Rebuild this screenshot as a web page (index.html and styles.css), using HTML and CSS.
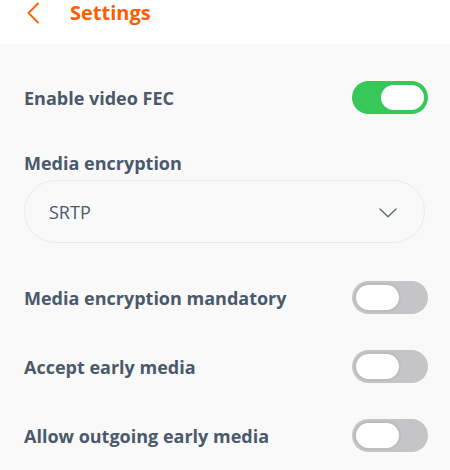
FILE: index.html
```html
<!DOCTYPE html>
<html lang="en">
<head>
  <meta charset="UTF-8">
  <meta name="viewport" content="width=device-width, initial-scale=1.0">
  <title>Settings</title>
  <link rel="stylesheet" href="styles.css">
</head>
<body>
  <!-- Cabeçalho -->
  <div class="header">
    <span class="back">
      <svg width="14" height="22" viewBox="0 0 14 22"><path d="M12 1.5 L2.5 11 L12 20.5" fill="none" stroke="#fe5e00" stroke-width="1.8" stroke-linecap="round" stroke-linejoin="round"/></svg>
    </span>
    <h1>Settings</h1>
  </div>

  <div class="list">
    <div class="row">
      <span class="label">Enable video FEC</span>
      <span class="toggle on"><span class="knob"></span></span>
    </div>

    <div class="section">
      <div class="label">Media encryption</div>
      <div class="select">
        <span>SRTP</span>
        <svg width="18" height="10" viewBox="0 0 18 10"><path d="M1 1 L9 8.8 L17 1" fill="none" stroke="#5d6a79" stroke-width="1.4" stroke-linecap="round" stroke-linejoin="round"/></svg>
      </div>
    </div>

    <div class="row">
      <span class="label">Media encryption mandatory</span>
      <span class="toggle"><span class="knob"></span></span>
    </div>
    <div class="row">
      <span class="label">Accept early media</span>
      <span class="toggle"><span class="knob"></span></span>
    </div>
    <div class="row">
      <span class="label">Allow outgoing early media</span>
      <span class="toggle"><span class="knob"></span></span>
    </div>
  </div>
</body>
</html>
```

FILE: styles.css
```css
body {
  font-family: "Open Sans", "Noto Sans", sans-serif;
  background-color: #f9f9f9;
  margin: 0;
  color: #4a596b;
}
.header {
  background: #fff;
  height: 44px;
  display: flex;
  align-items: flex-start;
  padding-left: 26px;
}
.back {
  display: flex;
  height: 24px;
  align-items: center;
  margin-top: 1px;
}
.header h1 {
  margin: 0 0 0 30px;
  font-size: 20px;
  line-height: 26px;
  font-weight: 700;
  color: #fe5e00;
}
.list {
  padding: 19px 22px 0 24px;
}
.row {
  height: 69px;
  display: flex;
  align-items: center;
  justify-content: space-between;
}
.label {
  font-size: 18px;
  font-weight: 700;
  line-height: 24px;
}
.section {
  padding-top: 19px;
  margin-bottom: 20px;
}
.select {
  margin: 5px 3px 0 0;
  height: 61px;
  border: 1px solid #ebebeb;
  border-radius: 32px;
  display: flex;
  align-items: center;
  justify-content: space-between;
  padding: 0 27px 0 24px;
  font-size: 18px;
}
.select svg {
  margin-top: 2px;
}
.toggle {
  width: 76px;
  height: 33px;
  border-radius: 17px;
  background: #c5c5c7;
  box-sizing: border-box;
  padding: 2px;
  display: flex;
}
.knob {
  width: 47px;
  height: 29px;
  box-sizing: border-box;
  border-radius: 15px;
  background: #fff;
  border: 2px solid #bdbdbf;
}
.toggle.on {
  background: #37c85a;
  justify-content: flex-end;
}
.toggle.on .knob {
  border-color: #37c85a;
}
```
